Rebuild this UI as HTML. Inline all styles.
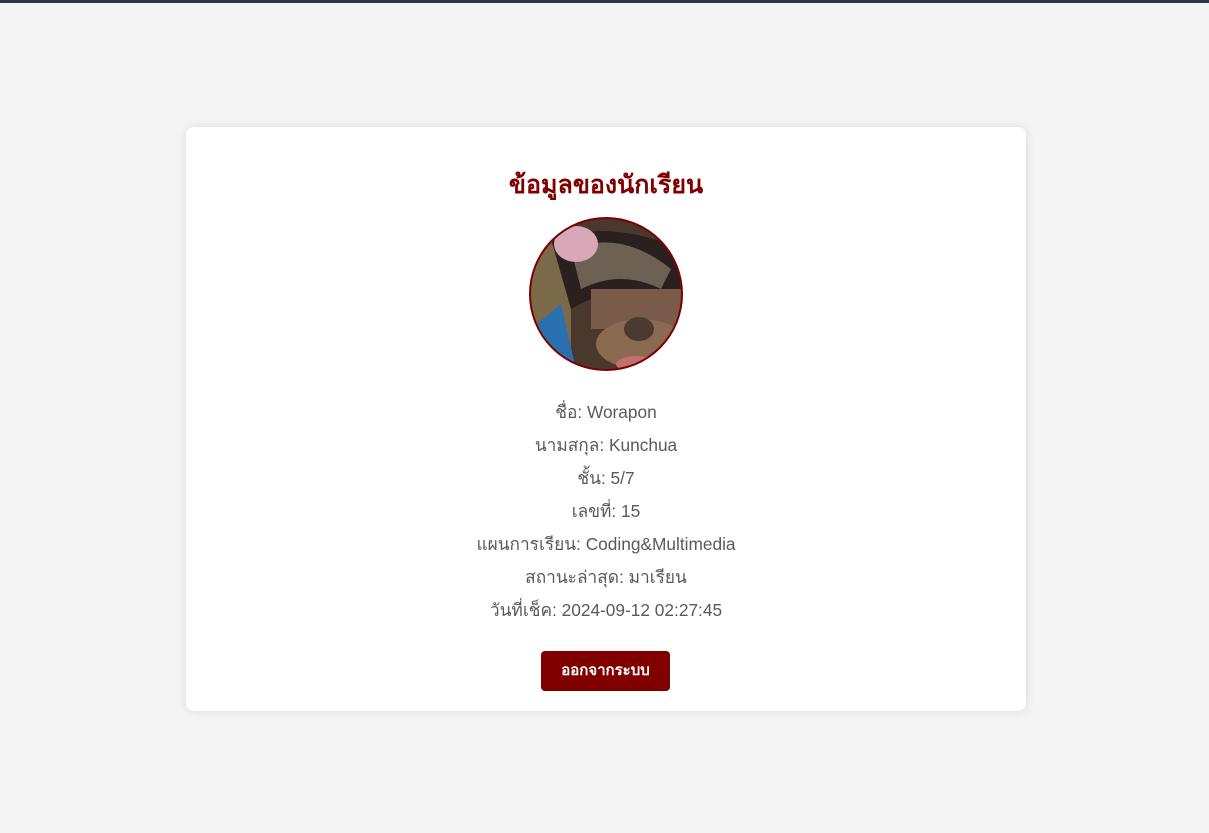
<!DOCTYPE html>
<html><head><meta charset="utf-8"><style>
html,body{margin:0;padding:0}
body{width:1209px;height:833px;background:#f4f4f4;font-family:"Liberation Sans","DejaVu Sans",sans-serif;position:relative;overflow:hidden}
.top{position:absolute;left:0;top:0;width:1209px;height:3px;background:#2a3a3c}
.card{position:absolute;left:186px;top:127px;width:840px;height:584px;background:#fff;border-radius:8px;box-shadow:0 0 10px rgba(0,0,0,.1);text-align:center}
h2{margin:0;position:absolute;top:38px;left:0;right:0;color:#800000;font-size:25px;font-weight:bold}
.av{position:absolute;left:343px;top:90px;width:150px;height:150px;border:2px solid #800000;border-radius:50%;overflow:hidden;background:#3a2a22}
.info{position:absolute;top:269px;left:0;right:0;color:#5a5a5a;font-size:17.3px;line-height:33px}
.btn{position:absolute;left:355px;top:524px;width:129px;height:40px;background:#800000;color:#fff;font-weight:bold;font-size:15px;line-height:40px;border-radius:4px}
</style></head><body>
<div class="top"></div>
<div class="card">
<h2>ข้อมูลของนักเรียน</h2>
<div class="av"><svg width="150" height="150" viewBox="0 0 150 150">
<rect width="150" height="150" fill="#4a382c"/>
<rect x="0" y="0" width="40" height="150" fill="#7a6a4a"/>
<path d="M20 20 Q80 0 150 30 L150 80 Q90 60 40 90 Z" fill="#2a2020"/>
<path d="M40 30 Q90 10 140 50 L130 70 Q90 50 50 70Z" fill="#8a7e6a" opacity=".7"/>
<ellipse cx="45" cy="25" rx="22" ry="18" fill="#d8a8b8"/>
<path d="M0 110 L30 85 L45 150 L0 150Z" fill="#2a70b0"/>
<rect x="60" y="70" width="90" height="40" fill="#7a5a48"/>
<ellipse cx="110" cy="125" rx="45" ry="25" fill="#8a6a50"/>
<ellipse cx="108" cy="110" rx="15" ry="12" fill="#4a3a30"/>
<ellipse cx="105" cy="145" rx="20" ry="8" fill="#c07070"/>
</svg></div>
<div class="info">
ชื่อ: Worapon<br>นามสกุล: Kunchua<br>ชั้น: 5/7<br>เลขที่: 15<br>แผนการเรียน: Coding&amp;Multimedia<br>สถานะล่าสุด: มาเรียน<br>วันที่เช็ค: 2024-09-12 02:27:45
</div>
<div class="btn">ออกจากระบบ</div>
</div>
</body></html>
